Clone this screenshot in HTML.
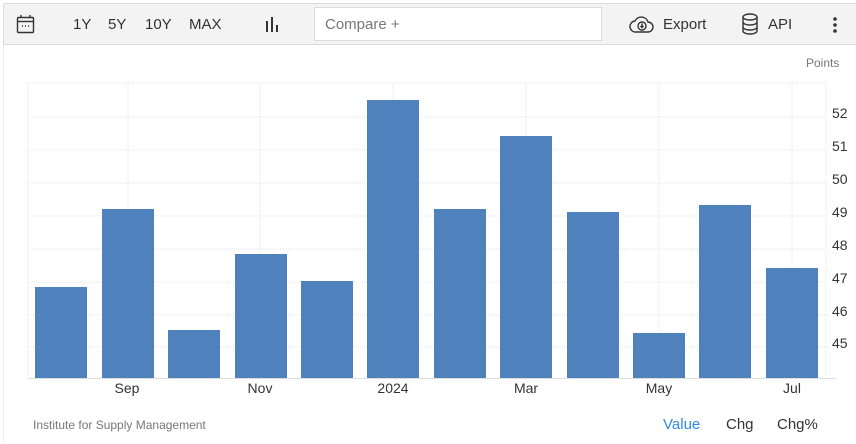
<!DOCTYPE html>
<html><head><style>
body{margin:0;width:856px;height:444px;background:#fff;font-family:"Liberation Sans",sans-serif;position:relative;overflow:hidden}
.tb{position:absolute;left:3px;top:3px;width:853px;height:40px;background:#f3f3f3;border:1px solid #dcdcdc;border-right:none}
.t{position:absolute;font-size:15px;color:#333;top:16px}
.cmp{position:absolute;left:314px;top:7px;width:286px;height:32px;background:#fff;border:1px solid #ddd}
.cmp span{position:absolute;left:10px;top:8px;font-size:15px;color:#777}
</style></head><body>
<div class="tb"></div>
<svg style="position:absolute;left:16px;top:14px" width="20" height="20" viewBox="0 0 20 20" fill="none" stroke="#333" stroke-width="1.4"><rect x="1.5" y="3.5" width="16" height="15" rx="1"/><line x1="1.5" y1="7.5" x2="17.5" y2="7.5"/><line x1="5" y1="1" x2="5" y2="4"/><line x1="14" y1="1" x2="14" y2="4"/><path d="M6 12h1M9 12h1M12 12h1" stroke-width="1.6"/></svg>
<div class="t" style="left:73px">1Y</div>
<div class="t" style="left:108px">5Y</div>
<div class="t" style="left:145px">10Y</div>
<div class="t" style="left:189px">MAX</div>
<svg style="position:absolute;left:265px;top:16px" width="16" height="16"><rect x="1" y="5" width="2" height="11" fill="#333"/><rect x="6" y="1" width="2" height="15" fill="#333"/><rect x="11" y="9" width="2" height="7" fill="#333"/></svg>
<div class="cmp"><span>Compare +</span></div>
<svg style="position:absolute;left:629px;top:14px" width="26" height="20" viewBox="0 0 26 20" fill="none" stroke="#333" stroke-width="1.4"><path d="M7 18h12a5 5 0 0 0 0-10 7 7 0 0 0-13-1 5.5 5.5 0 0 0 1 11z"/><circle cx="13" cy="12" r="4" /><path d="M13 9.5v4M11.5 12l1.5 1.5 1.5-1.5"/></svg>
<div class="t" style="left:663px">Export</div>
<svg style="position:absolute;left:741px;top:13px" width="18" height="22" viewBox="0 0 18 22" fill="none" stroke="#333" stroke-width="1.4"><ellipse cx="9" cy="4" rx="7" ry="3"/><path d="M2 4v14c0 1.7 3 3 7 3s7-1.3 7-3V4M2 9c0 1.7 3 3 7 3s7-1.3 7-3M2 14c0 1.7 3 3 7 3s7-1.3 7-3"/></svg>
<div class="t" style="left:768px">API</div>
<svg style="position:absolute;left:832px;top:16px" width="6" height="18"><circle cx="3" cy="3" r="1.8" fill="#333"/><circle cx="3" cy="9" r="1.8" fill="#333"/><circle cx="3" cy="15" r="1.8" fill="#333"/></svg>
<div style="position:absolute;left:3px;top:45px;width:1px;height:399px;background:#eee"></div>
<div style="position:absolute;left:806px;top:56px;font-size:12px;color:#777">Points</div>
<svg style="position:absolute;left:0;top:0" width="856" height="444">
<g stroke="#e6e6e6" stroke-dasharray="1,1" stroke-width="1">
<line x1="28" y1="83" x2="826" y2="83"/>
<line x1="28" y1="117" x2="826" y2="117"/><line x1="28" y1="150" x2="826" y2="150"/><line x1="28" y1="183" x2="826" y2="183"/><line x1="28" y1="216" x2="826" y2="216"/><line x1="28" y1="249" x2="826" y2="249"/><line x1="28" y1="282" x2="826" y2="282"/><line x1="28" y1="315" x2="826" y2="315"/><line x1="28" y1="347" x2="826" y2="347"/>
<line x1="28" y1="83" x2="28" y2="378"/><line x1="128" y1="83" x2="128" y2="378"/><line x1="260" y1="83" x2="260" y2="378"/><line x1="393" y1="83" x2="393" y2="378"/><line x1="526" y1="83" x2="526" y2="378"/><line x1="659" y1="83" x2="659" y2="378"/><line x1="792" y1="83" x2="792" y2="378"/><line x1="826" y1="83" x2="826" y2="378"/>
</g>
<line x1="28" y1="378.5" x2="836" y2="378.5" stroke="#ddd"/>
<g fill="#4f81bd">
<rect x="35" y="287" width="52" height="91"/><rect x="102" y="209" width="52" height="169"/><rect x="168" y="330" width="52" height="48"/><rect x="235" y="254" width="52" height="124"/><rect x="301" y="281" width="52" height="97"/><rect x="367" y="100" width="52" height="278"/><rect x="434" y="209" width="52" height="169"/><rect x="500" y="136" width="52" height="242"/><rect x="567" y="212" width="52" height="166"/><rect x="633" y="333" width="52" height="45"/><rect x="699" y="205" width="52" height="173"/><rect x="766" y="268" width="52" height="110"/>
</g>
<g font-family="Liberation Sans" font-size="14" fill="#333">
<text x="832" y="118">52</text><text x="832" y="151">51</text><text x="832" y="184">50</text><text x="832" y="217">49</text><text x="832" y="250">48</text><text x="832" y="283">47</text><text x="832" y="316">46</text><text x="832" y="348">45</text>
<g text-anchor="middle"><text x="127" y="393">Sep</text><text x="260" y="393">Nov</text><text x="393" y="393">2024</text><text x="526" y="393">Mar</text><text x="659" y="393">May</text><text x="792" y="393">Jul</text></g>
</g>
<text x="33" y="429" font-family="Liberation Sans" font-size="12" fill="#777">Institute for Supply Management</text>
<g font-family="Liberation Sans" font-size="15"><text x="663" y="429" fill="#2f8be6">Value</text><text x="726" y="429" fill="#333">Chg</text><text x="777" y="429" fill="#333">Chg%</text></g>
</svg>
</body></html>
